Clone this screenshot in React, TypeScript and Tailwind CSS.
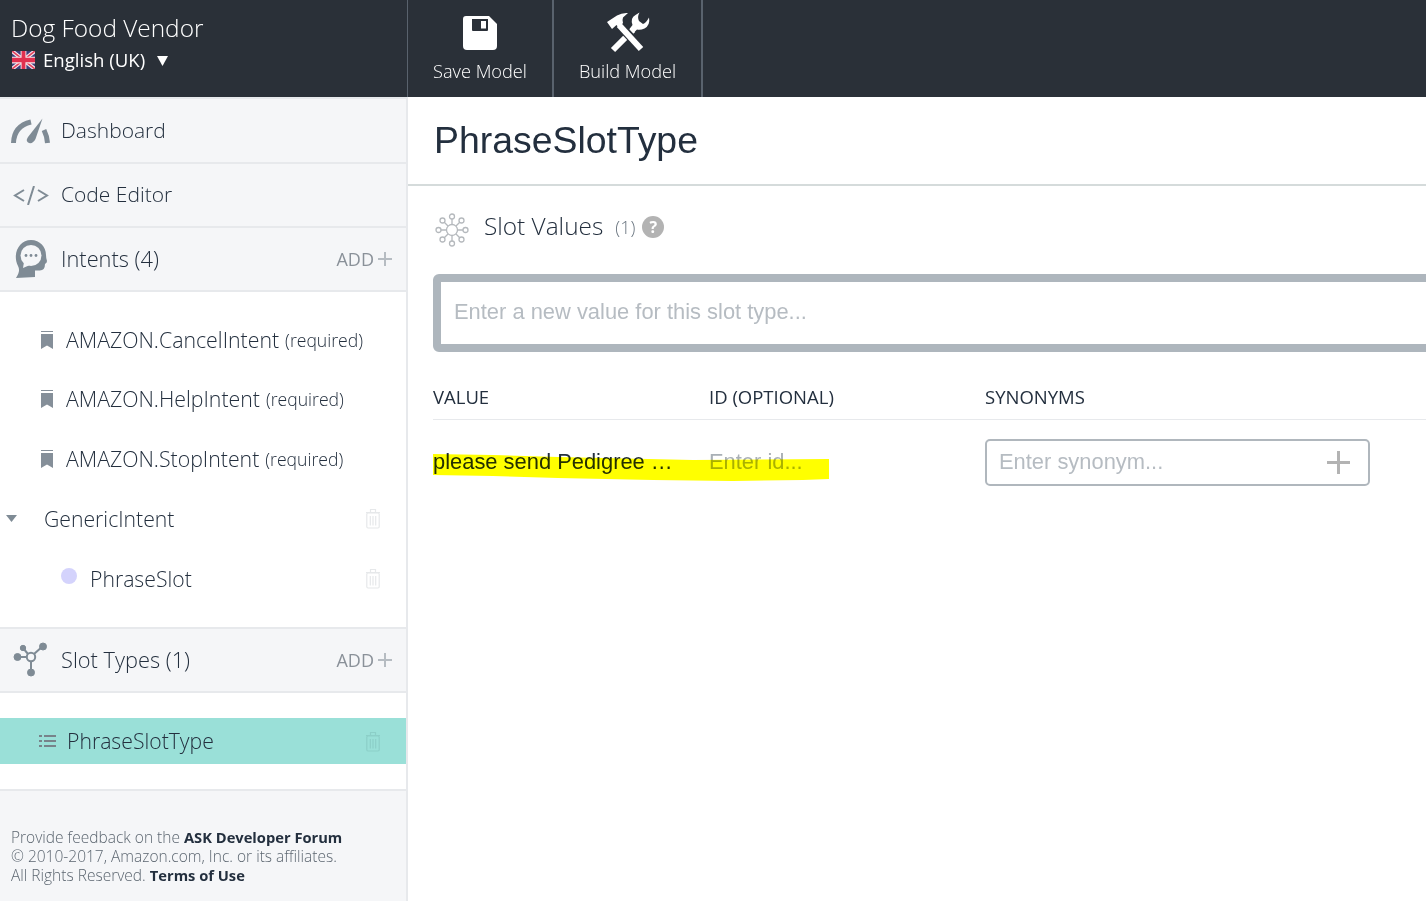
import React from "react";

const Bookmark = () => (
  <svg width="12" height="18" viewBox="0 0 12 18" className="shrink-0"><path d="M0 0H12V1H0ZM0 3H12V18L6 14.5L0 18Z" fill="#858f99" /></svg>
);
const Trash = ({ c = "#e6e8ea" }: { c?: string }) => (
  <svg width="16" height="21" viewBox="0 0 16 21" fill="none" stroke={c} strokeWidth="1.2">
    <path d="M1 4.5H15M5.5 4V1.5H10.5V4" />
    <rect x="1.8" y="5" width="12.4" height="15" rx="1.2" />
    <path d="M5.3 8V17.5M8 8V17.5M10.7 8V17.5" />
  </svg>
);
const AddBtn = () => (
  <div className="flex items-center gap-[4px] text-[18px] text-[#8a9199] font-normal">
    <span>ADD</span>
    <svg width="14" height="14" viewBox="0 0 14 14"><path d="M7 0V14M0 7H14" stroke="#b6bcc2" strokeWidth="2" /></svg>
  </div>
);
const Row = ({ icon, label, right, first, wide }: { icon: React.ReactNode; label: string; right?: React.ReactNode; first?: boolean; wide?: boolean }) => (
  <div className={first ? "flex h-[63px] items-center bg-[#f5f6f8] border-b-2 border-[#e7e9ec] box-content pr-[14px]" : "flex h-[62px] items-center bg-[#f5f6f8] border-b-2 border-[#e7e9ec] box-content pr-[14px]"}>
    <div className="flex w-[61px] justify-center shrink-0">{icon}</div>
    <span className={wide ? "text-[21.8px] text-[#232f3e] flex-1 font-light" : "text-[21px] text-[#232f3e] flex-1 font-light"}>{label}</span>
    {right}
  </div>
);
const IntentItem = ({ label }: { label: string }) => (
  <div className="flex h-[59.5px] items-center pl-[41px]">
    <Bookmark />
    <span className="ml-[13px] text-[21.3px] text-[#232f3e] font-light">{label}</span>
    <span className="ml-[6px] text-[17.6px] text-[#232f3e] font-light">(required)</span>
  </div>
);

export default function App() {
  return (
    <div className="h-[901px] w-[1426px] overflow-hidden flex flex-col bg-white" style={{ fontFamily: '"Open Sans", sans-serif' }}>
      <header className="h-[97px] bg-[#2a3038] flex shrink-0 text-white">
        <div className="w-[407px] pl-[11px] pt-[11px]">
          <div className="text-[24.4px] leading-[33px] font-light">Dog Food Vendor</div>
          <div className="flex items-center mt-[3px] text-[18.6px] leading-[26px] font-medium">
            <svg width="23" height="18" viewBox="0 0 60 40" preserveAspectRatio="none" className="ml-[1px] mr-[8px]">
              <rect width="60" height="40" fill="#3a3f7a" />
              <path d="M0 0L60 40M60 0L0 40" stroke="#f6e6ea" strokeWidth="9" />
              <path d="M0 0L60 40M60 0L0 40" stroke="#e0405c" strokeWidth="4" />
              <path d="M30 0V40M0 20H60" stroke="#f6e6ea" strokeWidth="15" />
              <path d="M30 0V40M0 20H60" stroke="#e0304f" strokeWidth="10" />
            </svg>
            <span>English (UK)</span>
            <svg width="11" height="10" viewBox="0 0 11 10" className="ml-[12px] mt-[2px]"><path d="M0 0H11L5.5 10Z" fill="#fff" /></svg>
          </div>
        </div>
        <div className="w-[147px] border-l border-r-2 border-[#59626d] flex flex-col items-center pt-[16px]">
          <svg width="34" height="34" viewBox="0 0 34 34"><path fill="#fff" fillRule="evenodd" d="M3 0H26L34 8V30Q34 34 30 34H4Q0 34 0 30V3Q0 0 3 0ZM9 3V14Q9 15 10 15H24Q25 15 25 14V3ZM18 5H23V12.5H18Z" /></svg>
          <span className="text-[18.2px] leading-[24px] mt-[8.5px] font-light">Save Model</span>
        </div>
        <div className="w-[149px] border-r-2 border-[#59626d] flex flex-col items-center pt-[8px]">
          <svg width="56" height="48" viewBox="0 0 56 48">
            <path d="M13 42L33 22" stroke="#fff" strokeWidth="6" fill="none" />
            <path fill="#fff" fillRule="evenodd" d="M32.5 17Q30 10 35.5 7L39.5 4.5Q37 9 39 13L43 16Q46 15 49 9.5Q50.5 17 44.5 20.5Q40 22.5 37 21.5L33.5 25L29.5 21Z" />
            <path d="M19 17L41 40" stroke="#2a3038" strokeWidth="9" fill="none" />
            <path d="M19 17L41 41" stroke="#fff" strokeWidth="6" fill="none" />
            <path fill="#fff" d="M7 14L17 7.5Q22 4.5 28 5L23 9.5Q22 12 23 15L19 20L16.5 17L12 21Z" />
          </svg>
          <span className="text-[18.2px] leading-[24px] mt-[2.5px] font-light">Build Model</span>
        </div>
      </header>
      <div className="flex flex-1 min-h-0">
        <aside className="w-[408px] shrink-0 border-r-2 border-[#e7e9ec] flex flex-col">
          <div className="border-t-2 border-[#e7e9ec]">
            <Row first label="Dashboard" icon={
              <svg width="39" height="26" viewBox="0 0 39 26" fill="#7f8b95">
                <path d="M2.5 25Q3 8 20 4" fill="none" stroke="#7f8b95" strokeWidth="5" />
                <path d="M31.5 0.5L24.5 21Q22 26 18 25Q14 23 17 19Z" />
                <path d="M33 12Q36 18 36.5 25" fill="none" stroke="#7f8b95" strokeWidth="5" />
              </svg>} />
            <Row label="Code Editor" icon={
              <svg width="36" height="19" viewBox="0 0 36 19" fill="none" stroke="#7f8b95" strokeWidth="2">
                <path d="M11 4L2 9.5L11 15M25 4L34 9.5L25 15M21 0L15 19" />
              </svg>} />
            <Row wide label="Intents (4)" right={<AddBtn />} icon={
              <svg width="32" height="38" viewBox="0 0 32 38">
                <path fill="#7f8b95" d="M16 0C25 0 31 7 31 15Q31 18 32 21Q32 23 30 24Q30 31 24 30.5H20V37L1 38C4 33 5 30 3 26C-3 14 4 0 16 0Z" />
                <circle cx="16" cy="15.5" r="10.5" fill="#f5f6f8" />
                <path fill="#f5f6f8" d="M9 22L8 28L15 25Z" />
                <circle cx="11" cy="15.5" r="1.4" fill="#7f8b95" /><circle cx="16" cy="15.5" r="1.4" fill="#7f8b95" /><circle cx="21" cy="15.5" r="1.4" fill="#7f8b95" />
              </svg>} />
          </div>
          <div className="h-[335px] pt-[18px] bg-white">
            <IntentItem label="AMAZON.CancelIntent" />
            <IntentItem label="AMAZON.HelpIntent" />
            <IntentItem label="AMAZON.StopIntent" />
            <div className="flex h-[60px] items-center pr-[25px]">
              <svg width="11" height="7" viewBox="0 0 11 7" className="ml-[6px]"><path d="M0 0H11L5.5 7Z" fill="#7f8b95" /></svg>
              <span className="ml-[27px] text-[21.2px] text-[#232f3e] flex-1 font-light">GenericIntent</span>
              <Trash />
            </div>
            <div className="flex h-[60px] items-center pr-[25px]">
              <span className="ml-[61px] w-[16px] h-[16px] rounded-full bg-[#d4d3fc] -mt-[6px]" />
              <span className="ml-[13px] text-[21.2px] text-[#232f3e] flex-1 font-light">PhraseSlot</span>
              <Trash />
            </div>
          </div>
          <div className="border-t-2 border-[#e7e9ec]">
            <Row wide label="Slot Types (1)" right={<AddBtn />} icon={
              <svg width="36" height="36" viewBox="0 0 36 36" fill="#7f8b95" stroke="#7f8b95">
                <path d="M5 15H13M10 6L15 12M21 12L30 4M18 19V30" strokeWidth="2" fill="none" />
                <circle cx="18" cy="15" r="4.2" fill="#f5f6f8" strokeWidth="2" />
                <circle cx="4.5" cy="15" r="3.5" /><circle cx="10" cy="6" r="2.7" /><circle cx="30" cy="4.5" r="3.5" /><circle cx="18" cy="30.5" r="3.5" />
              </svg>} />
          </div>
          <div className="h-[25px]" />
          <div className="h-[46px] bg-[#9ae0d8] flex items-center pr-[25px]">
            <svg width="17" height="14" viewBox="0 0 17 14" className="ml-[39px]" fill="#77838a">
              <rect x="0" y="1" width="3" height="2" /><rect x="0" y="6" width="3" height="2" /><rect x="0" y="11" width="3" height="2" />
              <rect x="5" y="1" width="12" height="2" /><rect x="5" y="6" width="12" height="2" /><rect x="5" y="11" width="12" height="2" />
            </svg>
            <span className="ml-[11px] text-[21.2px] text-[#232f3e] flex-1 font-light">PhraseSlotType</span>
            <Trash c="#8ccfc8" />
          </div>
          <div className="h-[25px]" />
          <div className="flex-1 border-t-2 border-[#e7e9ec] bg-[#f5f6f8] pl-[11px] pt-[37px] text-[15.5px] leading-[19px] text-[#5c6670] font-light">
            <div>Provide feedback on the <b className="text-[14.7px] font-bold text-[#232f3e]">ASK Developer Forum</b></div>
            <div>© 2010-2017, Amazon.com, Inc. or its affiliates.</div>
            <div>All Rights Reserved. <b className="text-[14.7px] font-bold text-[#232f3e]">Terms of Use</b></div>
          </div>
        </aside>
        <main className="flex-1 min-w-0 relative">
          <div className="h-[87px] border-b-2 border-[#d5dbdb] box-content pl-[26px] flex items-center">
            <h1 className="text-[37.4px] text-[#232f3e]" style={{ fontFamily: '"Liberation Sans", sans-serif' }}>PhraseSlotType</h1>
          </div>
          <div className="flex items-center pl-[26px] mt-[26px] h-[36px]">
            <svg width="36" height="36" viewBox="0 0 36 36" fill="none" stroke="#b5b9bd" strokeWidth="1.3">
              <circle cx="18" cy="18" r="5.5" />
              <path d="M18 12V7M18 24V29M12 18H7M24 18H29M14 14L10 10M22 14L26 10M14 22L10 26M22 22L26 26" />
              <circle cx="18" cy="4.5" r="2.5" /><circle cx="18" cy="31.5" r="2.5" /><circle cx="4.5" cy="18" r="2.5" /><circle cx="31.5" cy="18" r="2.5" />
              <circle cx="8.5" cy="8.5" r="2.5" /><circle cx="27.5" cy="8.5" r="2.5" /><circle cx="8.5" cy="27.5" r="2.5" /><circle cx="27.5" cy="27.5" r="2.5" />
            </svg>
            <span className="ml-[14px] mb-[8px] text-[24.4px] text-[#232f3e] font-light">Slot Values</span>
            <span className="ml-[12px] mb-[6px] text-[18px] text-[#6b7681] font-light">(1)</span>
            <span className="ml-[7px] mb-[6px] w-[22px] h-[22px] rounded-full bg-[#b3b3b3] text-white text-[16px] font-bold flex items-center justify-center">?</span>
          </div>
          <div className="ml-[25px] -mr-[10px] mt-[26px] h-[78px] border-[8px] border-[#aeb6bd] rounded-[6px] flex items-center pl-[13px] text-[21.9px] text-[#b6bcc2]" style={{ fontFamily: '"Liberation Sans", sans-serif' }}>
            <span className="-mt-[1px]">Enter a new value for this slot type...</span>
          </div>
          <div className="ml-[25px] mt-[30px] h-[38px] border-b border-[#e7e9ec] grid grid-cols-[276px_276px_1fr] text-[18.5px] text-[#232f3e] leading-[30px]">
            <span>VALUE</span><span>ID (OPTIONAL)</span><span>SYNONYMS</span>
          </div>
          <div className="ml-[25px] mt-[19px] grid grid-cols-[276px_276px_385px] items-center text-[21.9px] relative" style={{ fontFamily: '"Liberation Sans", sans-serif' }}>
            <span className="text-[#232f3e]">please send Pedigree …</span>
            <span className="text-[#a9b0b6]">Enter id...</span>
            <div className="h-[47px] border-2 border-[#b0b7bd] rounded-[5px] flex items-center pl-[12px] pr-[18px] justify-between text-[#b6bcc2]">
              <span>Enter synonym...</span>
              <svg width="23" height="23" viewBox="0 0 23 23" className="-mt-[1px]"><path d="M11.5 0V23M0 11.5H23" stroke="#b3b3b3" strokeWidth="3" /></svg>
            </div>
            <svg width="397" height="32" viewBox="0 0 397 32" className="absolute left-0 top-[12px] mix-blend-multiply">
              <path d="M0 3L60 4L125 6L260 9L396 8L396 28L370 29L300 30L220 29L125 27L60 25L0 24Z" fill="#ffff00" />
            </svg>
          </div>
        </main>
      </div>
    </div>
  );
}
